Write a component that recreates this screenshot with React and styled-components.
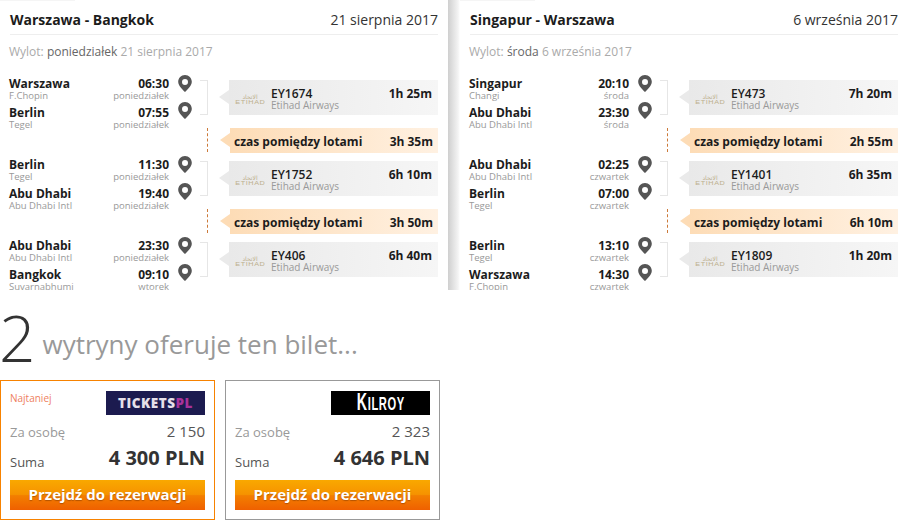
import React from 'react';
import styled, { createGlobalStyle } from 'styled-components';

const Global = createGlobalStyle`
  html, body { margin: 0; padding: 0; background: #fff; }
  body { font-family: "Open Sans", "Liberation Sans", sans-serif; color: #222; }
`;

const Page = styled.div`
  width: 910px;
  height: 523px;
  overflow: hidden;
`;
const Trips = styled.div`
  display: flex;
  height: 290px;
  overflow: hidden;
`;
const Panel = styled.section`
  width: ${p => p.$width}px;
  flex: none;
  box-sizing: border-box;
  padding: 0 ${p => p.$right}px 0 ${p => p.$left}px;
  &::before {
    content: '';
    display: block;
    width: 75px;
    height: 1px;
    margin-left: -${p => p.$left}px;
    background: #f5f5f5;
  }
`;
const Divider = styled.div`
  width: 12px;
  flex: none;
  background: linear-gradient(to right, #cfcfcf, #dedede 35%, #f4f4f4 85%, #fff);
`;
const Header = styled.header`
  display: flex;
  justify-content: space-between;
  align-items: baseline;
  height: 34px;
  box-sizing: border-box;
  padding-top: 9px;
  border-bottom: 1px solid #eee;
`;
const Route = styled.h2`
  margin: 0;
  font-size: 14px;
  line-height: 20px;
  font-weight: 700;
  color: #1c1c1c;
`;
const DateText = styled.span`
  font-size: 14px;
  line-height: 20px;
  color: #333;
`;
const Departure = styled.p`
  margin: 8px 0 0 -1px;
  height: 31px;
  font-size: 12px;
  line-height: 17px;
  color: #aaa;
  b { font-weight: 400; color: #666; }
`;
const Leg = styled.div`
  display: flex;
  height: 54px;
  margin-left: -1px;
`;
const Stops = styled.div`
  width: 160px;
  flex: none;
`;
const Stop = styled.div`
  display: grid;
  grid-template-columns: 1fr auto;
  grid-template-rows: 13px 9px;
  height: 29px;
  padding-top: 4px;
  box-sizing: border-box;
`;
const City = styled.span`
  font-size: 12px;
  line-height: 11px;
  font-weight: 700;
  color: #1c1c1c;
`;
const Time = styled(City)`
  text-align: right;
`;
const Sub = styled.span`
  font-size: 9.5px;
  line-height: 9px;
  color: #999;
`;
const SubRight = styled(Sub)`
  text-align: right;
`;
const Pins = styled.div`
  width: 14px;
  margin-left: 9px;
  flex: none;
  display: flex;
  flex-direction: column;
  gap: 10px;
  padding-top: 1px;
`;
const Bracket = styled.div`
  width: 8px;
  height: 35px;
  margin: 6px 0 0 8px;
  flex: none;
  border: 1px solid #e6e6e6;
  border-left: 0;
  box-sizing: border-box;
`;
const Flight = styled.div`
  position: relative;
  display: flex;
  box-sizing: border-box;
  width: 210px;
  height: 35px;
  margin: 6px 0 0 21px;
  padding: 0 7px;
  background: linear-gradient(to right, #e9e9e9, #f6f6f6);
  &::before {
    content: '';
    position: absolute;
    left: -10px;
    top: 10px;
    border: 7px solid transparent;
    border-left: 0;
    border-right: 10px solid #eaeaea;
  }
`;
const Logo = styled.div`
  width: 28px;
  flex: none;
  display: flex;
  flex-direction: column;
  align-items: center;
  color: #bdb08e;
  padding-top: 13px;
`;
const LogoArabic = styled.span`
  font-family: "DejaVu Sans", sans-serif;
  font-size: 6px;
  line-height: 7px;
`;
const LogoLatin = styled.span`
  font-family: "Liberation Sans", sans-serif;
  font-size: 5px;
  line-height: 5px;
  letter-spacing: 0.4px;
  transform: scaleX(1.45);
`;
const FlightInfo = styled.div`
  flex: 1;
  margin-left: 7px;
  padding-top: 8px;
  display: flex;
  flex-direction: column;
`;
const FlightNumber = styled.span`
  font-size: 12px;
  line-height: 11px;
  font-weight: 600;
  color: #1c1c1c;
`;
const Airline = styled.span`
  font-size: 10px;
  line-height: 12px;
  color: #999;
`;
const Duration = styled.span`
  font-size: 12px;
  line-height: 12px;
  padding: 8px 0 0;
  margin-right: -1px;
  font-weight: 700;
  color: #1c1c1c;
`;
const Stopover = styled.div`
  display: flex;
  height: 25px;
  margin: 0 0 2px;
  margin-left: -1px;
`;
const Dash = styled.div`
  width: 1px;
  height: 24px;
  margin-left: 198px;
  flex: none;
  border-left: 1px dashed #cc7a3a;
`;
const Wait = styled.div`
  position: relative;
  width: 210px;
  margin-left: 21px;
  box-sizing: border-box;
  padding: 2px 5px 0 4px;
  display: flex;
  justify-content: space-between;
  align-items: center;
  font-size: 12px;
  font-weight: 700;
  color: #1c1c1c;
  background: linear-gradient(to right, #fddcb6, #fff1e2);
  &::before {
    content: '';
    position: absolute;
    left: -10px;
    top: 5px;
    border: 7px solid transparent;
    border-left: 0;
    border-right: 10px solid #fddcb6;
  }
`;
const Headline = styled.div`
  display: flex;
  align-items: baseline;
  height: 90px;
  margin-left: -1px;
`;
const Count = styled.span`
  font-size: 64px;
  line-height: 96px;
  font-weight: 300;
  color: #333;
`;
const Lead = styled.span`
  margin-left: 7px;
  font-size: 26px;
  font-weight: 400;
  color: #999;
  position: relative;
  top: -8px;
`;
const Offers = styled.div`
  display: flex;
  gap: 10px;
`;
const Offer = styled.article`
  width: 215px;
  height: 140px;
  box-sizing: border-box;
  padding: 10px 9px 9px;
  border: 1px solid ${p => (p.$best ? '#f78200' : '#999')};
`;
const OfferTop = styled.div`
  display: flex;
  justify-content: space-between;
  height: 24px;
`;
const Cheapest = styled.span`
  font-size: 10px;
  line-height: 14px;
  color: #ee8060;
`;
const Shop = styled.div`
  width: 99px;
  height: 24px;
  margin-left: auto;
  display: flex;
  align-items: center;
  justify-content: center;
  white-space: nowrap;
  background: ${p => p.$bg};
  color: #fff;
`;
const TicketsName = styled.span`
  font-family: "Open Sans", sans-serif;
  font-size: 13.5px;
  font-weight: 800;
  color: #e6e0ea;
  letter-spacing: 0.5px;
  em { font-style: normal; color: #a8329a; }
`;
const KilroyName = styled.span`
  font-family: "Liberation Sans", sans-serif;
  font-size: 23px;
  line-height: 24px;
  font-weight: 700;
  transform: scaleX(0.62);
  letter-spacing: 1px;
  small { font-size: 18px; }
`;
const PriceRow = styled.div`
  display: flex;
  justify-content: space-between;
  align-items: ${p => (p.$start ? 'flex-start' : 'baseline')};
  margin-top: ${p => p.$top}px;
`;
const Label = styled.span`
  font-size: 13px;
  line-height: 18px;
  color: #999;
`;
const SumLabel = styled(Label)`
  margin-top: 8px;
  color: #555;
`;
const PerPerson = styled.span`
  font-size: 15px;
  line-height: 18px;
  color: #555;
`;
const Total = styled.span`
  font-size: 20px;
  line-height: 26px;
  font-weight: 700;
  color: #333;
`;
const Book = styled.button`
  display: block;
  width: 195px;
  height: 30px;
  margin-top: 9px;
  padding: 0 0 2px;
  border: 0;
  font-family: inherit;
  font-size: 15px;
  font-weight: 700;
  color: #fff;
  text-shadow: 0 1px 1px rgba(120, 50, 0, 0.5);
  background: linear-gradient(to bottom, #f9a800, #f69300 48%, #f37f00 52%, #ef6000);
`;

const Pin = () => (
  <svg width="14" height="17" viewBox="0 0 14 17">
    <path
      fill="#555"
      fillRule="evenodd"
      d="M7 0C3.1 0 .2 3 .2 6.8c0 3.8 4 7.6 6.8 10.2 2.8-2.6 6.8-6.4 6.8-10.2C13.8 3 10.9 0 7 0zm0 4a3 3 0 1 1 0 6 3 3 0 0 1 0-6z"
    />
  </svg>
);

const trips = [
  {
    route: 'Warszawa - Bangkok',
    date: '21 sierpnia 2017',
    day: 'poniedziałek',
    legs: [
      { from: ['Warszawa', 'F.Chopin', '06:30', 'poniedziałek'], to: ['Berlin', 'Tegel', '07:55', 'poniedziałek'], no: 'EY1674', time: '1h 25m', wait: '3h 35m' },
      { from: ['Berlin', 'Tegel', '11:30', 'poniedziałek'], to: ['Abu Dhabi', 'Abu Dhabi Intl', '19:40', 'poniedziałek'], no: 'EY1752', time: '6h 10m', wait: '3h 50m' },
      { from: ['Abu Dhabi', 'Abu Dhabi Intl', '23:30', 'poniedziałek'], to: ['Bangkok', 'Suvarnabhumi', '09:10', 'wtorek'], no: 'EY406', time: '6h 40m' },
    ],
  },
  {
    route: 'Singapur - Warszawa',
    date: '6 września 2017',
    day: 'środa',
    legs: [
      { from: ['Singapur', 'Changi', '20:10', 'środa'], to: ['Abu Dhabi', 'Abu Dhabi Intl', '23:30', 'środa'], no: 'EY473', time: '7h 20m', wait: '2h 55m' },
      { from: ['Abu Dhabi', 'Abu Dhabi Intl', '02:25', 'czwartek'], to: ['Berlin', 'Tegel', '07:00', 'czwartek'], no: 'EY1401', time: '6h 35m', wait: '6h 10m' },
      { from: ['Berlin', 'Tegel', '13:10', 'czwartek'], to: ['Warszawa', 'F.Chopin', '14:30', 'czwartek'], no: 'EY1809', time: '1h 20m' },
    ],
  },
];

const StopRow = ({ stop }) => (
  <Stop>
    <City>{stop[0]}</City>
    <Time>{stop[2]}</Time>
    <Sub>{stop[1]}</Sub>
    <SubRight>{stop[3]}</SubRight>
  </Stop>
);

const Trip = ({ trip, width, left, right }) => (
  <Panel $width={width} $left={left} $right={right}>
    <Header>
      <Route>{trip.route}</Route>
      <DateText>{trip.date}</DateText>
    </Header>
    <Departure>
      Wylot: <b>{trip.day}</b> {trip.date}
    </Departure>
    {trip.legs.map(leg => (
      <React.Fragment key={leg.no}>
        <Leg>
          <Stops>
            <StopRow stop={leg.from} />
            <StopRow stop={leg.to} />
          </Stops>
          <Pins>
            <Pin />
            <Pin />
          </Pins>
          <Bracket />
          <Flight>
            <Logo>
              <LogoArabic>الاتحاد</LogoArabic>
              <LogoLatin>ETIHAD</LogoLatin>
            </Logo>
            <FlightInfo>
              <FlightNumber>{leg.no}</FlightNumber>
              <Airline>Etihad Airways</Airline>
            </FlightInfo>
            <Duration>{leg.time}</Duration>
          </Flight>
        </Leg>
        {leg.wait && (
          <Stopover>
            <Dash />
            <Wait>
              <span>czas pomiędzy lotami</span>
              <span>{leg.wait}</span>
            </Wait>
          </Stopover>
        )}
      </React.Fragment>
    ))}
  </Panel>
);

const offers = [
  { best: true, bg: '#1c1b4f', name: <TicketsName>TICKETS<em>PL</em></TicketsName>, one: '2 150', total: '4 300 PLN' },
  { best: false, bg: '#000', name: <KilroyName>K<small>ILROY</small></KilroyName>, one: '2 323', total: '4 646 PLN' },
];

export default function App() {
  return (
    <Page>
      <Global />
      <Trips>
        <Trip trip={trips[0]} width={448} left={10} right={10} />
        <Divider />
        <Trip trip={trips[1]} width={450} left={10} right={12} />
      </Trips>
      <Headline>
        <Count>2</Count>
        <Lead>wytryny oferuje ten bilet...</Lead>
      </Headline>
      <Offers>
        {offers.map(o => (
          <Offer key={o.one} $best={o.best}>
            <OfferTop>
              {o.best && <Cheapest>Najtaniej</Cheapest>}
              <Shop $bg={o.bg}>{o.name}</Shop>
            </OfferTop>
            <PriceRow $top={7}>
              <Label>Za osobę</Label>
              <PerPerson>{o.one}</PerPerson>
            </PriceRow>
            <PriceRow $top={4} $start>
              <SumLabel>Suma</SumLabel>
              <Total>{o.total}</Total>
            </PriceRow>
            <Book>Przejdź do rezerwacji</Book>
          </Offer>
        ))}
      </Offers>
    </Page>
  );
}
